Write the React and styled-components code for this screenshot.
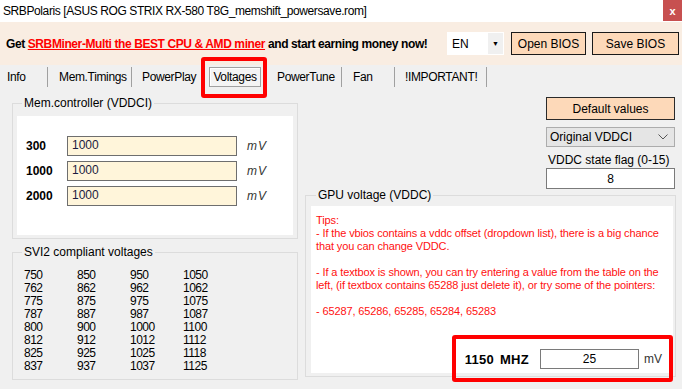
import styled, { createGlobalStyle } from "styled-components";

const GlobalStyle = createGlobalStyle`
  html, body {
    margin: 0;
    padding: 0;
    background: #f0f0f0;
  }
  body {
    font-family: "Liberation Sans", Arial, sans-serif;
    font-size: 12px;
    color: #000;
  }
  * {
    box-sizing: border-box;
  }
`;

const Window = styled.div`
  width: 682px;
  height: 389px;
  display: flex;
  flex-direction: column;
  background: #f0f0f0;
  overflow: hidden;
`;

const TitleBar = styled.div`
  height: 22px;
  background: #ffffff;
  display: flex;
  align-items: center;
  justify-content: space-between;
  padding-left: 3px;
`;

const Title = styled.span`
  font-size: 12px;
  letter-spacing: -0.4px;
`;

const CloseButton = styled.div`
  width: 19px;
  height: 21px;
  align-self: flex-start;
  background: #c75050;
  color: #fff;
  font-weight: bold;
  font-size: 11px;
  display: flex;
  align-items: center;
  justify-content: center;
`;

const Header = styled.div`
  height: 43px;
  background: #f9ede2;
  display: flex;
  align-items: center;
  padding: 0 3px 0 6px;
`;

const Promo = styled.div`
  flex: 1;
  font-weight: bold;
  font-size: 12px;
  letter-spacing: -0.4px;
  white-space: nowrap;
`;

const PromoLink = styled.span`
  color: #ff0000;
  text-decoration: underline;
`;

const LangSelect = styled.div`
  width: 57px;
  height: 23px;
  background: #fff;
  display: flex;
  align-items: center;
  justify-content: space-between;
  padding-left: 5px;
  font-size: 12px;
  margin-right: 7px;
`;

const LangArrow = styled.div`
  width: 15px;
  height: 21px;
  margin-right: 1px;
  background: #f0f0f0;
  display: flex;
  align-items: center;
  justify-content: center;
  font-size: 7px;
`;

const HeadButton = styled.div`
  width: ${({ $w }) => $w}px;
  height: 23px;
  margin-left: ${({ $ml }) => $ml || 0}px;
  background: #fdd9b9;
  border: 1px solid #1a1a1a;
  display: flex;
  align-items: center;
  justify-content: center;
  font-size: 12px;
`;

const TabStrip = styled.div`
  height: 25px;
  display: flex;
  align-items: flex-start;
  padding-top: 2px;
  font-size: 12px;
  letter-spacing: -0.35px;
`;

const Tab = styled.div`
  position: relative;
  width: ${({ $w }) => $w}px;
  height: 20px;
  padding-left: ${({ $pl }) => $pl}px;
  display: flex;
  align-items: center;
  justify-content: ${({ $active }) => ($active ? "center" : "flex-start")};
  border-right: 1px solid ${({ $sep }) => ($sep ? "#a0a0a0" : "transparent")};
  ${({ $active }) =>
    $active &&
    `
    border: 1px solid #a0a0a0;
    background: #f4f4f4;
    box-shadow: inset 1px 1px 0 #ffffff;
  `}
`;

const Callout = styled.div`
  position: absolute;
  top: ${({ $t }) => $t}px;
  left: ${({ $l }) => $l}px;
  right: ${({ $r }) => $r}px;
  bottom: ${({ $b }) => $b}px;
  border: 4px solid #ff0000;
  border-radius: 3px;
  pointer-events: none;
`;

const Panel = styled.div`
  flex: 1;
  display: grid;
  grid-template-columns: 286px 371px;
  column-gap: 7px;
  padding-left: 12px;
  padding-top: 6px;
`;

const Column = styled.div`
  display: flex;
  flex-direction: column;
`;

const Group = styled.fieldset`
  margin: 0 0 ${({ $mb }) => $mb || 0}px 0;
  padding: 0 ${({ $pr }) => $pr}px 3px ${({ $pl }) => $pl}px;
  border: 1px solid #dcdcdc;
  min-width: 0;
`;

const Legend = styled.legend`
  padding: 0 2px;
  margin-left: 5px;
  font-size: 12px;
  line-height: ${({ $lh }) => $lh || 14}px;
`;

const WhiteArea = styled.div`
  background: #ffffff;
  height: ${({ $h }) => $h}px;
  margin-top: ${({ $mt }) => $mt}px;
  display: flex;
  flex-direction: column;
  overflow: visible;
`;

const MemRows = styled.div`
  display: flex;
  flex-direction: column;
  gap: 5px;
  padding: 20px 0 0 9px;
`;

const MemRow = styled.div`
  display: flex;
  align-items: center;
`;

const MemLabel = styled.span`
  width: 41px;
  font-weight: bold;
  font-size: 12px;
`;

const CreamInput = styled.div`
  width: 170px;
  height: 20px;
  background: #fff5da;
  border: 1px solid #6e6e6e;
  color: #1b1b40;
  font-size: 12px;
  padding: 1px 0 0 4px;
`;

const Unit = styled.span`
  margin-left: ${({ $ml }) => $ml}px;
  font-size: 12px;
  font-style: ${({ $italic }) => ($italic ? "italic" : "normal")};
  letter-spacing: ${({ $italic }) => ($italic ? "1px" : "0")};
  color: #333;
`;

const NumberGrid = styled.div`
  display: grid;
  grid-template-columns: repeat(4, 53px);
  grid-auto-rows: 13px;
  padding: 10px 0 3px 7px;
  font-size: 12px;
  line-height: 13px;
  letter-spacing: -0.5px;
`;

const Controls = styled.div`
  align-self: flex-end;
  width: 129px;
  margin-right: 1px;
  margin-top: 1px;
  display: flex;
  flex-direction: column;
`;

const DefaultButton = styled.div`
  height: 23px;
  background: #fdd9b9;
  border: 1px solid #2a2a2a;
  display: flex;
  align-items: center;
  justify-content: center;
  font-size: 12px;
`;

const Dropdown = styled.div`
  height: 20px;
  margin-top: 7px;
  background: #e5e5e5;
  border: 1px solid #acacac;
  display: flex;
  align-items: center;
  justify-content: space-between;
  padding: 0 6px 0 3px;
  font-size: 12px;
`;

const FieldLabel = styled.div`
  margin-top: 6px;
  padding-left: 2px;
  font-size: 12px;
  line-height: 14px;
`;

const WhiteBox = styled.div`
  height: 21px;
  margin-top: 1px;
  background: #fff;
  border: 1px solid #7a7a7a;
  display: flex;
  align-items: center;
  justify-content: center;
  font-size: 12px;
`;

const Tips = styled.div`
  padding: 8px 0 0 5px;
  color: #ff1010;
  font-size: 11px;
  line-height: 13px;
  white-space: pre;
  letter-spacing: -0.12px;
`;

const ValueRow = styled.div`
  position: relative;
  margin-top: auto;
  align-self: flex-end;
  width: 217px;
  height: 34px;
  display: flex;
  align-items: center;
  justify-content: flex-end;
  padding: 10px 11px 4px 0;
`;

const ClockLabel = styled.span`
  font-weight: bold;
  font-size: 13px;
  letter-spacing: 0.3px;
  margin-right: 11px;
  word-spacing: 2px;
`;

const SmallInput = styled.div`
  width: 99px;
  height: 20px;
  background: #fff;
  border: 1px solid #7a7a7a;
  display: flex;
  align-items: center;
  justify-content: center;
  font-size: 12px;
`;

const tabs = [
  { name: "Info", w: 48, pl: 7, sep: true },
  { name: "Mem.Timings", w: 84, pl: 11, sep: true },
  { name: "PowerPlay", w: 77, pl: 10 },
  { name: "Voltages", w: 52, pl: 0, active: true },
  { name: "PowerTune", w: 81, pl: 16, sep: true },
  { name: "Fan", w: 53, pl: 11, sep: true },
  { name: "!IMPORTANT!", w: 92, pl: 10, sep: true },
];

const memRows = ["300", "1000", "2000"];

const svi2 = [
  ["750", "850", "950", "1050"],
  ["762", "862", "962", "1062"],
  ["775", "875", "975", "1075"],
  ["787", "887", "987", "1087"],
  ["800", "900", "1000", "1100"],
  ["812", "912", "1012", "1112"],
  ["825", "925", "1025", "1118"],
  ["837", "937", "1037", "1125"],
];

const tipsText = `Tips:
- If the vbios contains a vddc offset (dropdown list), there is a big chance
that you can change VDDC.

- If a textbox is shown, you can try entering a value from the table on the
left, (if textbox contains 65288 just delete it), or try some of the pointers:

- 65287, 65286, 65285, 65284, 65283`;

const Chevron = () => (
  <svg width="10" height="6" viewBox="0 0 10 6">
    <path d="M0.5 0.5 L5 5 L9.5 0.5" fill="none" stroke="#555" strokeWidth="1" />
  </svg>
);

export default function App() {
  return (
    <>
      <GlobalStyle />
      <Window>
        <TitleBar>
          <Title>SRBPolaris [ASUS ROG STRIX RX-580 T8G_memshift_powersave.rom]</Title>
          <CloseButton>x</CloseButton>
        </TitleBar>

        <Header>
          <Promo>
            Get <PromoLink>SRBMiner-Multi the BEST CPU &amp; AMD miner</PromoLink> and start
            earning money now!
          </Promo>
          <LangSelect>
            EN
            <LangArrow>▼</LangArrow>
          </LangSelect>
          <HeadButton $w={75}>Open BIOS</HeadButton>
          <HeadButton $w={87} $ml={6}>
            Save BIOS
          </HeadButton>
        </Header>

        <TabStrip>
          {tabs.map((t) => (
            <Tab key={t.name} $w={t.w} $pl={t.pl} $sep={t.sep} $active={t.active}>
              {t.name}
              {t.active && <Callout $t={-11} $l={-9} $r={-7} $b={-12} />}
            </Tab>
          ))}
        </TabStrip>

        <Panel>
          <Column>
            <Group $pl={4} $pr={4} $mb={6}>
              <Legend>Mem.controller (VDDCI)</Legend>
              <WhiteArea $h={119} $mt={6}>
                <MemRows>
                  {memRows.map((r) => (
                    <MemRow key={r}>
                      <MemLabel>{r}</MemLabel>
                      <CreamInput>1000</CreamInput>
                      <Unit $italic $ml={10}>
                        mV
                      </Unit>
                    </MemRow>
                  ))}
                </MemRows>
              </WhiteArea>
            </Group>

            <Group $pl={4} $pr={4}>
              <Legend>SVI2 compliant voltages</Legend>
              <NumberGrid>
                {svi2.flat().map((v, i) => (
                  <span key={i}>{v}</span>
                ))}
              </NumberGrid>
            </Group>
          </Column>

          <Column>
            <Controls>
              <DefaultButton>Default values</DefaultButton>
              <Dropdown>
                Original VDDCI
                <Chevron />
              </Dropdown>
              <FieldLabel>VDDC state flag (0-15)</FieldLabel>
              <WhiteBox>8</WhiteBox>
            </Controls>

            <Group $pl={5} $pr={2}>
              <Legend $lh={12}>GPU voltage (VDDC)</Legend>
              <WhiteArea $h={167} $mt={5}>
                <Tips>{tipsText}</Tips>
                <ValueRow>
                  <ClockLabel>1150 MHZ</ClockLabel>
                  <SmallInput>25</SmallInput>
                  <Unit $ml={5}>mV</Unit>
                  <Callout $t={-4} $l={-4} $r={0} $b={-9} />
                </ValueRow>
              </WhiteArea>
            </Group>
          </Column>
        </Panel>
      </Window>
    </>
  );
}
